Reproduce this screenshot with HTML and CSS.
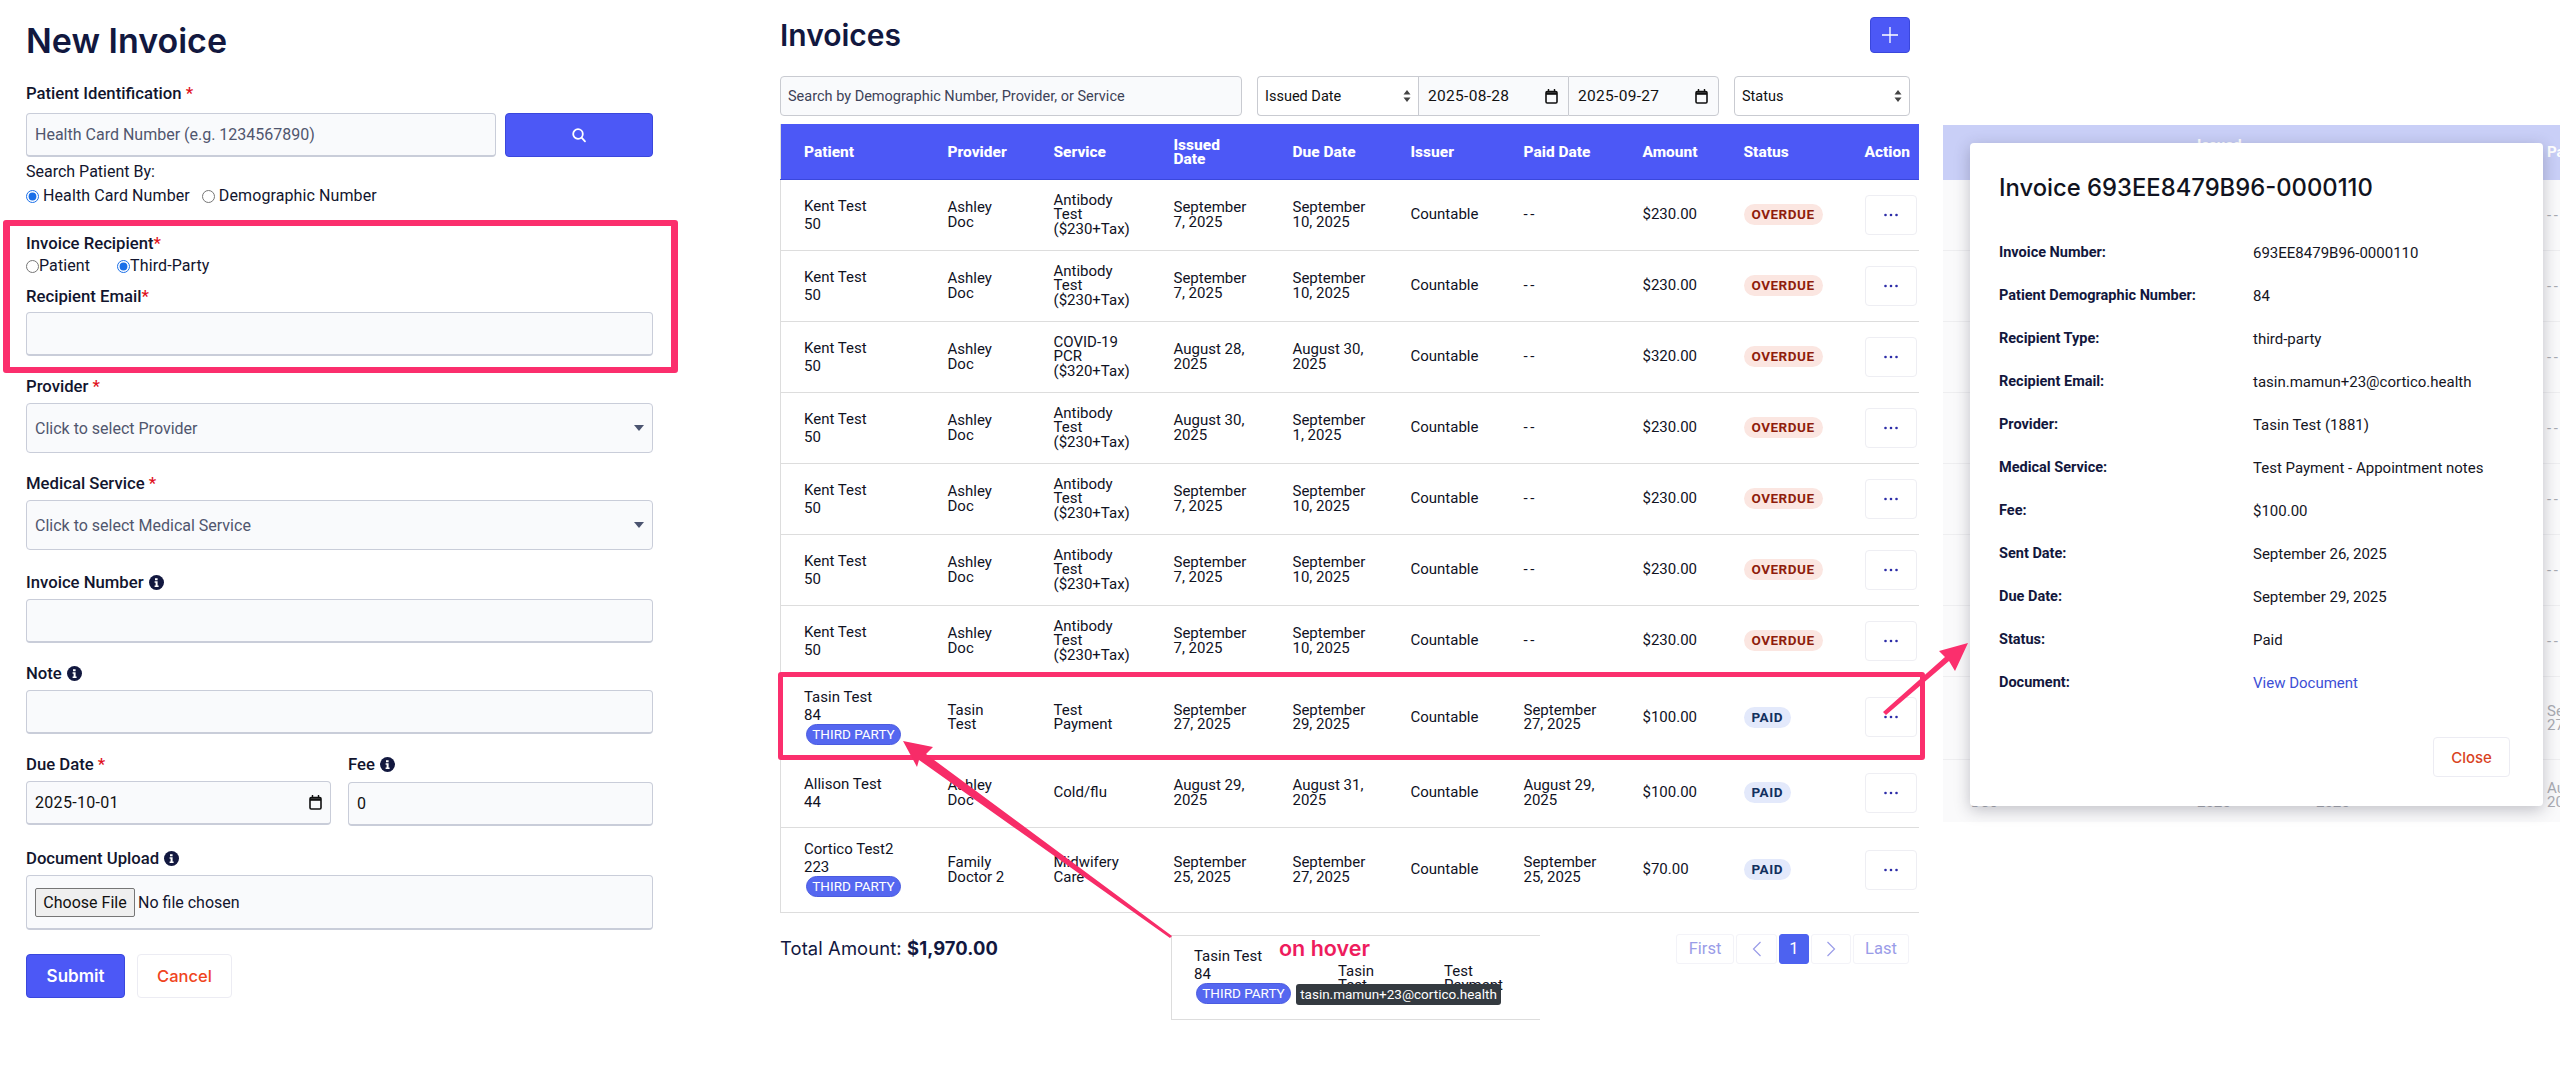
FILE: index.html
```html
<!DOCTYPE html>
<html lang="en">
<head>
<meta charset="utf-8">
<title>Invoices</title>
<link rel="stylesheet" href="styles.css">
</head>
<body>
<div class="canvas">

  <section class="form-panel">
    <h1 class="form-title">New Invoice</h1>
    <div class="field field-first">
      <label class="label">Patient Identification <span class="req">*</span></label>
      <div class="search-row">
        <input class="input input-search" type="text" placeholder="Health Card Number (e.g. 1234567890)">
        <button class="btn-primary btn-search" type="button" aria-label="Search">
          <svg width="16" height="16" viewBox="0 0 16 16" fill="none" stroke="#fff" stroke-width="1.8" stroke-linecap="round"><circle cx="7" cy="7" r="4.8"/><path d="M10.6 10.6 14 14.4"/></svg>
        </button>
      </div>
    </div>
    <div class="plain-line search-by">Search Patient By:</div>
    <div class="radio-row radio-row-search">
      <label class="radio-label"><input type="radio" name="by" checked><span class="gap-text">Health Card Number</span></label>
      <label class="radio-label"><input type="radio" name="by"><span class="gap-text">Demographic Number</span></label>
    </div>
    <div class="label recipient-label">Invoice Recipient<span class="req">*</span></div>
    <div class="radio-row radio-row-recipient">
      <label class="radio-label"><input type="radio" name="rec">Patient</label>
      <label class="radio-label"><input type="radio" name="rec" checked>Third-Party</label>
    </div>
    <div class="field field-email">
      <label class="label">Recipient Email<span class="req">*</span></label>
      <input class="input" type="text">
    </div>
    <div class="field">
      <label class="label">Provider <span class="req">*</span></label>
      <div class="input select-tall"><span>Click to select Provider</span><svg width="10" height="6" viewBox="0 0 10 6"><path d="M0 0h10L5 6z" fill="#4b5470"/></svg></div>
    </div>
    <div class="field">
      <label class="label">Medical Service <span class="req">*</span></label>
      <div class="input select-tall"><span>Click to select Medical Service</span><svg width="10" height="6" viewBox="0 0 10 6"><path d="M0 0h10L5 6z" fill="#4b5470"/></svg></div>
    </div>
    <div class="field field-wide">
      <label class="label">Invoice Number
        <svg class="info" width="15" height="15" viewBox="0 0 15 15"><circle cx="7.5" cy="7.5" r="7.5" fill="#12183f"/><path d="M6 3.2h2.6v2H6zM5.6 6.3h3v4.2h1v1.4H5.6v-1.4h1V7.7h-1z" fill="#fff"/></svg>
      </label>
      <input class="input" type="text">
    </div>
    <div class="field">
      <label class="label">Note
        <svg class="info" width="15" height="15" viewBox="0 0 15 15"><circle cx="7.5" cy="7.5" r="7.5" fill="#12183f"/><path d="M6 3.2h2.6v2H6zM5.6 6.3h3v4.2h1v1.4H5.6v-1.4h1V7.7h-1z" fill="#fff"/></svg>
      </label>
      <input class="input" type="text">
    </div>
    <div class="two-col">
      <div class="field">
        <label class="label">Due Date <span class="req">*</span></label>
        <div class="input date-box"><span>2025-10-01</span>
          <svg width="13" height="15" viewBox="0 0 13 15" fill="none" stroke="#111"><rect x="1" y="2.5" width="11" height="11.5" rx="1.2" stroke-width="1.6"/><path d="M1 4.5h11" stroke-width="2.6"/><path d="M3.5 0v2.5M9.5 0v2.5" stroke-width="1.4"/></svg>
        </div>
      </div>
      <div class="field field-fee">
        <label class="label">Fee
          <svg class="info" width="15" height="15" viewBox="0 0 15 15"><circle cx="7.5" cy="7.5" r="7.5" fill="#12183f"/><path d="M6 3.2h2.6v2H6zM5.6 6.3h3v4.2h1v1.4H5.6v-1.4h1V7.7h-1z" fill="#fff"/></svg>
        </label>
        <input class="input input-value" type="text" value="0">
      </div>
    </div>
    <div class="field field-wide">
      <label class="label">Document Upload
        <svg class="info" width="15" height="15" viewBox="0 0 15 15"><circle cx="7.5" cy="7.5" r="7.5" fill="#12183f"/><path d="M6 3.2h2.6v2H6zM5.6 6.3h3v4.2h1v1.4H5.6v-1.4h1V7.7h-1z" fill="#fff"/></svg>
      </label>
      <div class="input file-box"><button class="file-btn" type="button">Choose File</button><span>No file chosen</span></div>
    </div>
    <div class="form-actions">
      <button class="btn-primary btn-submit" type="button">Submit</button>
      <button class="btn-ghost btn-cancel" type="button">Cancel</button>
    </div>
  </section>

  <section class="list-panel">
    <div class="list-head">
      <h2 class="list-title">Invoices</h2>
      <button class="btn-primary btn-add" type="button" aria-label="Add">
        <svg width="16" height="16" viewBox="0 0 16 16" stroke="#fff" stroke-width="1.3"><path d="M8 0v16M0 8h16"/></svg>
      </button>
    </div>
    <div class="filters">
      <input class="filter filter-search" type="text" placeholder="Search by Demographic Number, Provider, or Service">
      <div class="filter-group">
        <div class="filter filter-select filter-type"><span>Issued Date</span><svg width="8" height="12" viewBox="0 0 8 12" fill="#444"><path d="M4 0l3.5 4.6H.5zM4 12 .5 7.4h7z"/></svg></div>
        <div class="filter filter-select filter-date"><span>2025-08-28</span>
          <svg width="13" height="15" viewBox="0 0 13 15" fill="none" stroke="#111"><rect x="1" y="2.5" width="11" height="11.5" rx="1.2" stroke-width="1.6"/><path d="M1 4.5h11" stroke-width="2.6"/><path d="M3.5 0v2.5M9.5 0v2.5" stroke-width="1.4"/></svg>
        </div>
        <div class="filter filter-select filter-date filter-date-last"><span>2025-09-27</span>
          <svg width="13" height="15" viewBox="0 0 13 15" fill="none" stroke="#111"><rect x="1" y="2.5" width="11" height="11.5" rx="1.2" stroke-width="1.6"/><path d="M1 4.5h11" stroke-width="2.6"/><path d="M3.5 0v2.5M9.5 0v2.5" stroke-width="1.4"/></svg>
        </div>
      </div>
      <div class="filter filter-select filter-status"><span>Status</span><svg width="8" height="12" viewBox="0 0 8 12" fill="#444"><path d="M4 0l3.5 4.6H.5zM4 12 .5 7.4h7z"/></svg></div>
    </div>

    <table class="invoices">
      <colgroup>
        <col class="c-patient"><col class="c-provider"><col class="c-service"><col class="c-issued"><col class="c-due"><col class="c-issuer"><col class="c-paid"><col class="c-amount"><col class="c-status"><col class="c-action">
      </colgroup>
      <thead>
        <tr><th>Patient</th><th>Provider</th><th>Service</th><th>Issued<br>Date</th><th>Due Date</th><th>Issuer</th><th>Paid Date</th><th>Amount</th><th>Status</th><th>Action</th></tr>
      </thead>
      <tbody>
        <tr class="row-std"><td class="patient">Kent Test<br>50</td><td>Ashley<br>Doc</td><td>Antibody<br>Test<br>($230+Tax)</td><td>September<br>7, 2025</td><td>September<br>10, 2025</td><td>Countable</td><td class="dash">--</td><td>$230.00</td><td><span class="pill pill-overdue">OVERDUE</span></td><td><button class="btn-more" type="button" aria-label="More"><svg width="14" height="4" viewBox="0 0 14 4" fill="#2c2ca8"><circle cx="1.5" cy="2" r="1.3"/><circle cx="7" cy="2" r="1.3"/><circle cx="12.5" cy="2" r="1.3"/></svg></button></td></tr>
        <tr class="row-std"><td class="patient">Kent Test<br>50</td><td>Ashley<br>Doc</td><td>Antibody<br>Test<br>($230+Tax)</td><td>September<br>7, 2025</td><td>September<br>10, 2025</td><td>Countable</td><td class="dash">--</td><td>$230.00</td><td><span class="pill pill-overdue">OVERDUE</span></td><td><button class="btn-more" type="button" aria-label="More"><svg width="14" height="4" viewBox="0 0 14 4" fill="#2c2ca8"><circle cx="1.5" cy="2" r="1.3"/><circle cx="7" cy="2" r="1.3"/><circle cx="12.5" cy="2" r="1.3"/></svg></button></td></tr>
        <tr class="row-std"><td class="patient">Kent Test<br>50</td><td>Ashley<br>Doc</td><td>COVID-19<br>PCR<br>($320+Tax)</td><td>August 28,<br>2025</td><td>August 30,<br>2025</td><td>Countable</td><td class="dash">--</td><td>$320.00</td><td><span class="pill pill-overdue">OVERDUE</span></td><td><button class="btn-more" type="button" aria-label="More"><svg width="14" height="4" viewBox="0 0 14 4" fill="#2c2ca8"><circle cx="1.5" cy="2" r="1.3"/><circle cx="7" cy="2" r="1.3"/><circle cx="12.5" cy="2" r="1.3"/></svg></button></td></tr>
        <tr class="row-std"><td class="patient">Kent Test<br>50</td><td>Ashley<br>Doc</td><td>Antibody<br>Test<br>($230+Tax)</td><td>August 30,<br>2025</td><td>September<br>1, 2025</td><td>Countable</td><td class="dash">--</td><td>$230.00</td><td><span class="pill pill-overdue">OVERDUE</span></td><td><button class="btn-more" type="button" aria-label="More"><svg width="14" height="4" viewBox="0 0 14 4" fill="#2c2ca8"><circle cx="1.5" cy="2" r="1.3"/><circle cx="7" cy="2" r="1.3"/><circle cx="12.5" cy="2" r="1.3"/></svg></button></td></tr>
        <tr class="row-std"><td class="patient">Kent Test<br>50</td><td>Ashley<br>Doc</td><td>Antibody<br>Test<br>($230+Tax)</td><td>September<br>7, 2025</td><td>September<br>10, 2025</td><td>Countable</td><td class="dash">--</td><td>$230.00</td><td><span class="pill pill-overdue">OVERDUE</span></td><td><button class="btn-more" type="button" aria-label="More"><svg width="14" height="4" viewBox="0 0 14 4" fill="#2c2ca8"><circle cx="1.5" cy="2" r="1.3"/><circle cx="7" cy="2" r="1.3"/><circle cx="12.5" cy="2" r="1.3"/></svg></button></td></tr>
        <tr class="row-std"><td class="patient">Kent Test<br>50</td><td>Ashley<br>Doc</td><td>Antibody<br>Test<br>($230+Tax)</td><td>September<br>7, 2025</td><td>September<br>10, 2025</td><td>Countable</td><td class="dash">--</td><td>$230.00</td><td><span class="pill pill-overdue">OVERDUE</span></td><td><button class="btn-more" type="button" aria-label="More"><svg width="14" height="4" viewBox="0 0 14 4" fill="#2c2ca8"><circle cx="1.5" cy="2" r="1.3"/><circle cx="7" cy="2" r="1.3"/><circle cx="12.5" cy="2" r="1.3"/></svg></button></td></tr>
        <tr class="row-std"><td class="patient">Kent Test<br>50</td><td>Ashley<br>Doc</td><td>Antibody<br>Test<br>($230+Tax)</td><td>September<br>7, 2025</td><td>September<br>10, 2025</td><td>Countable</td><td class="dash">--</td><td>$230.00</td><td><span class="pill pill-overdue">OVERDUE</span></td><td><button class="btn-more" type="button" aria-label="More"><svg width="14" height="4" viewBox="0 0 14 4" fill="#2c2ca8"><circle cx="1.5" cy="2" r="1.3"/><circle cx="7" cy="2" r="1.3"/><circle cx="12.5" cy="2" r="1.3"/></svg></button></td></tr>
        <tr class="row-tasin"><td class="patient patient-badged">Tasin Test<br>84<br><span class="badge">THIRD PARTY</span></td><td>Tasin<br>Test</td><td>Test<br>Payment</td><td>September<br>27, 2025</td><td>September<br>29, 2025</td><td>Countable</td><td>September<br>27, 2025</td><td>$100.00</td><td><span class="pill pill-paid">PAID</span></td><td><button class="btn-more" type="button" aria-label="More"><svg width="14" height="4" viewBox="0 0 14 4" fill="#2c2ca8"><circle cx="1.5" cy="2" r="1.3"/><circle cx="7" cy="2" r="1.3"/><circle cx="12.5" cy="2" r="1.3"/></svg></button></td></tr>
        <tr class="row-allison"><td class="patient">Allison Test<br>44</td><td>Ashley<br>Doc</td><td>Cold/flu</td><td>August 29,<br>2025</td><td>August 31,<br>2025</td><td>Countable</td><td>August 29,<br>2025</td><td>$100.00</td><td><span class="pill pill-paid">PAID</span></td><td><button class="btn-more" type="button" aria-label="More"><svg width="14" height="4" viewBox="0 0 14 4" fill="#2c2ca8"><circle cx="1.5" cy="2" r="1.3"/><circle cx="7" cy="2" r="1.3"/><circle cx="12.5" cy="2" r="1.3"/></svg></button></td></tr>
        <tr class="row-cortico"><td class="patient patient-badged">Cortico Test2<br>223<br><span class="badge">THIRD PARTY</span></td><td>Family<br>Doctor 2</td><td>Midwifery<br>Care</td><td>September<br>25, 2025</td><td>September<br>27, 2025</td><td>Countable</td><td>September<br>25, 2025</td><td>$70.00</td><td><span class="pill pill-paid">PAID</span></td><td><button class="btn-more" type="button" aria-label="More"><svg width="14" height="4" viewBox="0 0 14 4" fill="#2c2ca8"><circle cx="1.5" cy="2" r="1.3"/><circle cx="7" cy="2" r="1.3"/><circle cx="12.5" cy="2" r="1.3"/></svg></button></td></tr>
      </tbody>
    </table>

    <div class="list-foot">
      <div class="total">Total Amount: <strong>$1,970.00</strong></div>
      <nav class="pager">
        <span class="page page-first">First</span>
        <span class="page page-prev"><svg width="10" height="16" viewBox="0 0 10 16" fill="none" stroke="#9a9ce8" stroke-width="1.2"><path d="M8.5 1 1.5 8l7 7"/></svg></span>
        <span class="page page-active">1</span>
        <span class="page page-next"><svg width="10" height="16" viewBox="0 0 10 16" fill="none" stroke="#9a9ce8" stroke-width="1.2"><path d="M1.5 1l7 7-7 7"/></svg></span>
        <span class="page page-last">Last</span>
      </nav>
    </div>
  </section>

  <section class="backdrop">
    <div class="dim-head"><span class="dim-th-issued">Issued<br>Date</span><span class="dim-th-paid">Paid Date</span></div>
    <div class="dim-row"><span class="dim-end dash">--</span></div>
    <div class="dim-row"><span class="dim-end dash">--</span></div>
    <div class="dim-row"><span class="dim-end dash">--</span></div>
    <div class="dim-row"><span class="dim-end dash">--</span></div>
    <div class="dim-row"><span class="dim-end dash">--</span></div>
    <div class="dim-row"><span class="dim-end dash">--</span></div>
    <div class="dim-row"><span class="dim-end dash">--</span></div>
    <div class="dim-row dim-row-tall"><span class="dim-end">September<br>27, 2025</span></div>
    <div class="dim-row dim-row-last"><span class="dim-a">Ashley<br>Doc</span><span class="dim-b">August 29,<br>2025</span><span class="dim-c">August 31,<br>2025</span><span class="dim-end">August 29,<br>2025</span></div>
  </section>

  <aside class="modal">
    <h3 class="modal-title">Invoice 693EE8479B96-0000110</h3>
    <dl class="details">
      <dt>Invoice Number:</dt><dd>693EE8479B96-0000110</dd>
      <dt>Patient Demographic Number:</dt><dd>84</dd>
      <dt>Recipient Type:</dt><dd>third-party</dd>
      <dt>Recipient Email:</dt><dd>tasin.mamun+23@cortico.health</dd>
      <dt>Provider:</dt><dd>Tasin Test (1881)</dd>
      <dt>Medical Service:</dt><dd>Test Payment - Appointment notes</dd>
      <dt>Fee:</dt><dd>$100.00</dd>
      <dt>Sent Date:</dt><dd>September 26, 2025</dd>
      <dt>Due Date:</dt><dd>September 29, 2025</dd>
      <dt>Status:</dt><dd>Paid</dd>
      <dt>Document:</dt><dd><a class="doc-link" href="#">View Document</a></dd>
    </dl>
    <div class="modal-foot"><button class="btn-ghost btn-close" type="button">Close</button></div>
  </aside>

  <div class="mark mark-form"></div>
  <div class="mark mark-row"></div>

  <aside class="hover-card">
    <div class="hover-patient">Tasin Test<br>84<br><span class="badge">THIRD PARTY</span></div>
    <div class="hover-cell hover-provider">Tasin<br>Test</div>
    <div class="hover-cell hover-service">Test<br>Payment</div>
    <div class="hover-label">on hover</div>
    <div class="tooltip">tasin.mamun+23@cortico.health</div>
  </aside>

  <svg class="arrows" width="2560" height="1077" viewBox="0 0 2560 1077">
    <path d="M903 741 933 747 926 754 1172 936 1170 938 919 760 917 767Z" fill="#f72c68"/>
    <path d="M1968 643 1955 671 1949 661 1886 715 1883 712 1945 657 1939 651Z" fill="#fb2f6d"/>
  </svg>
</div>
</body>
</html>
```

FILE: styles.css
```css
* { box-sizing: border-box; }
html, body { margin: 0; padding: 0; background: #fff; }
body { font-family: "Roboto", "Liberation Sans", sans-serif; font-size: 15px; color: #12152e; }
.canvas { position: relative; width: 2560px; height: 1077px; overflow: hidden; background: #fff; }

/* form panel */
.form-panel { position: absolute; left: 26px; top: 0; width: 627px; }
.form-title { margin: 21px 0 0; font: 600 34px/40px "Inter", sans-serif; color: #12183f; }
.label { display: block; font-weight: 500; font-size: 16.7px; line-height: 20px; color: #12152e; }
.req { color: #e01020; }
.info { vertical-align: -2px; margin-left: 1px; }
.field { margin-top: 21px; }
.field-first { margin-top: 23px; }
.field-wide { margin-top: 23px; }
.field-email { margin-top: 11px; }
.field .label { margin-bottom: 6px; }
.field-first .label { margin-bottom: 9px; }
.field-email .label { margin-bottom: 5px; }
.input { display: block; width: 100%; height: 44px; padding: 0 8px; border: 1px solid #c9cdd9; border-bottom-width: 2px; border-radius: 4px; background: #f9fafc; font: 400 16px "Roboto", sans-serif; color: #12152e; }
.input::placeholder { color: #50566e; opacity: 1; }
.input-value { color: #111; }
.search-row { display: flex; gap: 9px; }
.input-search { flex: 1 1 auto; width: auto; }
.btn-primary { border: 1px solid #3a47dc; border-radius: 4px; background: #4c58f6; color: #fff; display: flex; align-items: center; justify-content: center; padding: 0; }
.btn-search { flex: 0 0 148px; height: 44px; }
.plain-line { line-height: 20px; font-size: 16px; }
.search-by { margin-top: 5px; }
.radio-row { display: flex; line-height: 20px; font-size: 16px; letter-spacing: .1px; }
.radio-label { display: flex; align-items: center; }
.radio-label input { margin: 0; width: 13px; height: 13px; accent-color: #1a6fe8; }
.gap-text { margin-left: 4px; }
.radio-row-search { margin-top: 4px; gap: 12px; }
.radio-row-recipient { margin-top: 2px; gap: 27px; }
.recipient-label { margin-top: 28px; }
.select-tall { height: 50px; display: flex; align-items: center; justify-content: space-between; padding: 0 8px; color: #50566e; border-width: 1px; }
.date-box { display: flex; align-items: center; justify-content: space-between; color: #111; letter-spacing: .3px; }
.two-col { display: grid; grid-template-columns: 305px 305px; gap: 17px; }
.field-fee .input { margin-top: 7px; }
.file-box { height: 55px; display: flex; align-items: center; gap: 3px; }
.file-btn { width: 100px; height: 29px; padding: 0; border: 1px solid #767676; border-radius: 2px; background: #efefef; font: 400 16px "Roboto", sans-serif; color: #111; }
.form-actions { display: flex; gap: 12px; margin-top: 24px; }
.btn-submit { width: 99px; height: 44px; font: 600 17px "Inter", sans-serif; }
.btn-ghost { border: 1px solid #ececf3; border-radius: 4px; background: #fff; padding: 0; }
.btn-cancel { width: 95px; height: 44px; font: 500 16.5px "Inter", sans-serif; color: #f0441d; }

/* list panel */
.list-panel { position: absolute; left: 780px; top: 0; width: 1138px; }
.list-head { display: flex; justify-content: space-between; align-items: center; padding: 17px 8px 0 0; }
.list-title { margin: 0; font: 600 30px/36px "Inter", sans-serif; color: #12183f; }
.btn-add { width: 40px; height: 36px; }
.filters { display: flex; gap: 15px; margin-top: 23px; padding-right: 8px; }
.filter { height: 40px; padding: 0 7px; border: 1px solid #c9cbd1; border-radius: 4px; font: 400 14.5px "Roboto", sans-serif; color: #111; background: #fff; }
.filter::placeholder { color: #3d4258; opacity: 1; }
.filter-search { width: 462px; background: #f9fafc; }
.filter-group { display: flex; width: 462px; }
.filter-select { display: flex; align-items: center; justify-content: space-between; }
.filter-type { width: 161px; border-radius: 4px 0 0 4px; border-right-width: 0; }
.filter-date { width: 150px; border-radius: 0; border-right-width: 0; background: #f9fafc; font-size: 15.5px; letter-spacing: .3px; padding: 0 10px 0 9px; }
.filter-date-last { width: 151px; border-right-width: 1px; border-radius: 0 4px 4px 0; }
.filter-status { width: 176px; }
.invoices { width: 1138px; margin-top: 8px; border-collapse: collapse; table-layout: fixed; font-size: 15px; line-height: 14.4px; color: #10121f; border-left: 1px solid #ddd; }
.c-patient { width: 144px; } .c-provider { width: 106px; } .c-service { width: 120px; } .c-issued { width: 119px; } .c-due { width: 118px; }
.c-issuer { width: 113px; } .c-paid { width: 119px; } .c-amount { width: 101px; } .c-status { width: 121px; } .c-action { width: 77px; }
.invoices th { height: 55px; padding: 2px 0 0 23px; background: #4c58f6; color: #fff; text-align: left; font-weight: 800; font-size: 15.5px; border-bottom: 1px solid #3a47dc; white-space: nowrap; }
.invoices td { padding: 0 0 0 23px; border-bottom: 1px solid #ddd; vertical-align: middle; white-space: nowrap; }
.invoices .patient { line-height: 18px; }
.invoices .patient-badged { padding-bottom: 2px; }
.dash { letter-spacing: 2.5px; }
.row-std { height: 71px; }
.row-tasin { height: 82px; }
.row-allison { height: 69px; }
.row-cortico { height: 85px; }
.badge { display: inline-block; height: 21px; width: 95px; margin-left: 2px; border-radius: 11px; background: #5567f0; border: 1px solid #4a5be0; color: #fff; font-size: 13.5px; line-height: 19px; text-align: center; vertical-align: top; }
.pill { display: inline-block; height: 21px; padding: 0 8px; border-radius: 11px; font-weight: 700; font-size: 13.5px; line-height: 21px; letter-spacing: .5px; }
.pill-overdue { background: #fbe6e1; color: #8f1d0c; }
.pill-paid { background: #e3e9fb; color: #12305e; }
.btn-more { display: flex; align-items: center; justify-content: center; width: 52px; height: 40px; padding: 0; border: 1px solid #eeeef3; border-radius: 4px; background: #fff; }
.list-foot { display: flex; justify-content: space-between; align-items: center; margin-top: 19px; padding-right: 9px; }
.total { font: 400 18.4px "Inter", sans-serif; color: #12183f; letter-spacing: .1px; }
.total strong { font-weight: 700; }
.pager { display: flex; gap: 2px; height: 30px; margin-top: 2px; }
.page { display: flex; align-items: center; justify-content: center; height: 30px; border: 1px solid #f3f3f8; border-radius: 3px; font-size: 16.5px; color: #9a9ce8; }
.page-first { width: 58px; }
.page-prev { width: 41px; }
.page-next { width: 40px; }
.page-last { width: 56px; }
.page-active { width: 30px; background: #4d62f0; color: #fff; border-color: #4d62f0; }

/* dimmed table behind the modal */
.backdrop { position: absolute; left: 1943px; top: 125px; width: 617px; height: 697px; overflow: hidden; background: #fafafb; font-size: 15px; line-height: 14.4px; color: #a9abb2; }
.dim-head { position: relative; height: 55px; background: #c9cff7; color: #fff; font-weight: 700; }
.dim-th-issued { position: absolute; left: 254px; top: 13px; }
.dim-th-paid { position: absolute; left: 604px; top: 20px; white-space: nowrap; }
.dim-row { position: relative; height: 71px; border-bottom: 1px solid #eeeef0; }
.dim-row-tall { height: 83px; }
.dim-row-last { height: 69px; border-bottom: 0; }
.dim-end { position: absolute; left: 604px; top: 50%; transform: translateY(-50%); white-space: nowrap; }
.dim-a, .dim-b, .dim-c { position: absolute; top: 50%; transform: translateY(-50%); }
.dim-a { left: 28px; } .dim-b { left: 254px; } .dim-c { left: 373px; }

/* modal */
.modal { position: absolute; left: 1970px; top: 143px; width: 573px; height: 663px; padding: 31px 33px 0 29px; background: #fff; border-radius: 4px; box-shadow: 0 4px 16px rgba(40,40,60,.28); }
.modal-title { margin: 0; font: 500 23.8px/28px "Inter", sans-serif; color: #111320; }
.details { display: grid; grid-template-columns: 254px 1fr; grid-auto-rows: 43px; align-items: center; margin: 29px 0 0; font-size: 15px; }
.details dt { font-weight: 700; font-size: 14.5px; color: #12173d; }
.details dd { margin: 0; color: #15161f; }
.doc-link { color: #3d4fd6; text-decoration: none; }
.modal-foot { display: flex; justify-content: flex-end; margin-top: 33px; }
.btn-close { width: 77px; height: 40px; font: 500 15px "Inter", sans-serif; color: #d9431f; }

/* annotations */
.mark { position: absolute; border: 6px solid #fb2f6d; border-radius: 3px; pointer-events: none; }
.mark-form { left: 3px; top: 220px; width: 675px; height: 153px; border-width: 6px 7px; }
.mark-row { left: 778px; top: 672px; width: 1147px; height: 88px; border-width: 5px; }
.hover-card { position: absolute; left: 1171px; top: 935px; width: 369px; height: 85px; background: #fff; border: 1px solid #ddd; border-right: 0; font-size: 15px; line-height: 14.4px; color: #10121f; }
.hover-patient { position: absolute; left: 22px; top: 11px; line-height: 18px; }
.hover-cell { position: absolute; top: 28px; }
.hover-provider { left: 166px; }
.hover-service { left: 272px; }
.hover-label { position: absolute; left: 107px; top: 0; font: 600 21.5px/24px "Inter", sans-serif; color: #ee1c5d; }
.tooltip { position: absolute; left: 124px; top: 48px; width: 205px; height: 21px; border-radius: 3px; background: #343a40; color: #fff; font-size: 13.5px; line-height: 21px; text-align: center; }
.arrows { position: absolute; left: 0; top: 0; pointer-events: none; }
```
